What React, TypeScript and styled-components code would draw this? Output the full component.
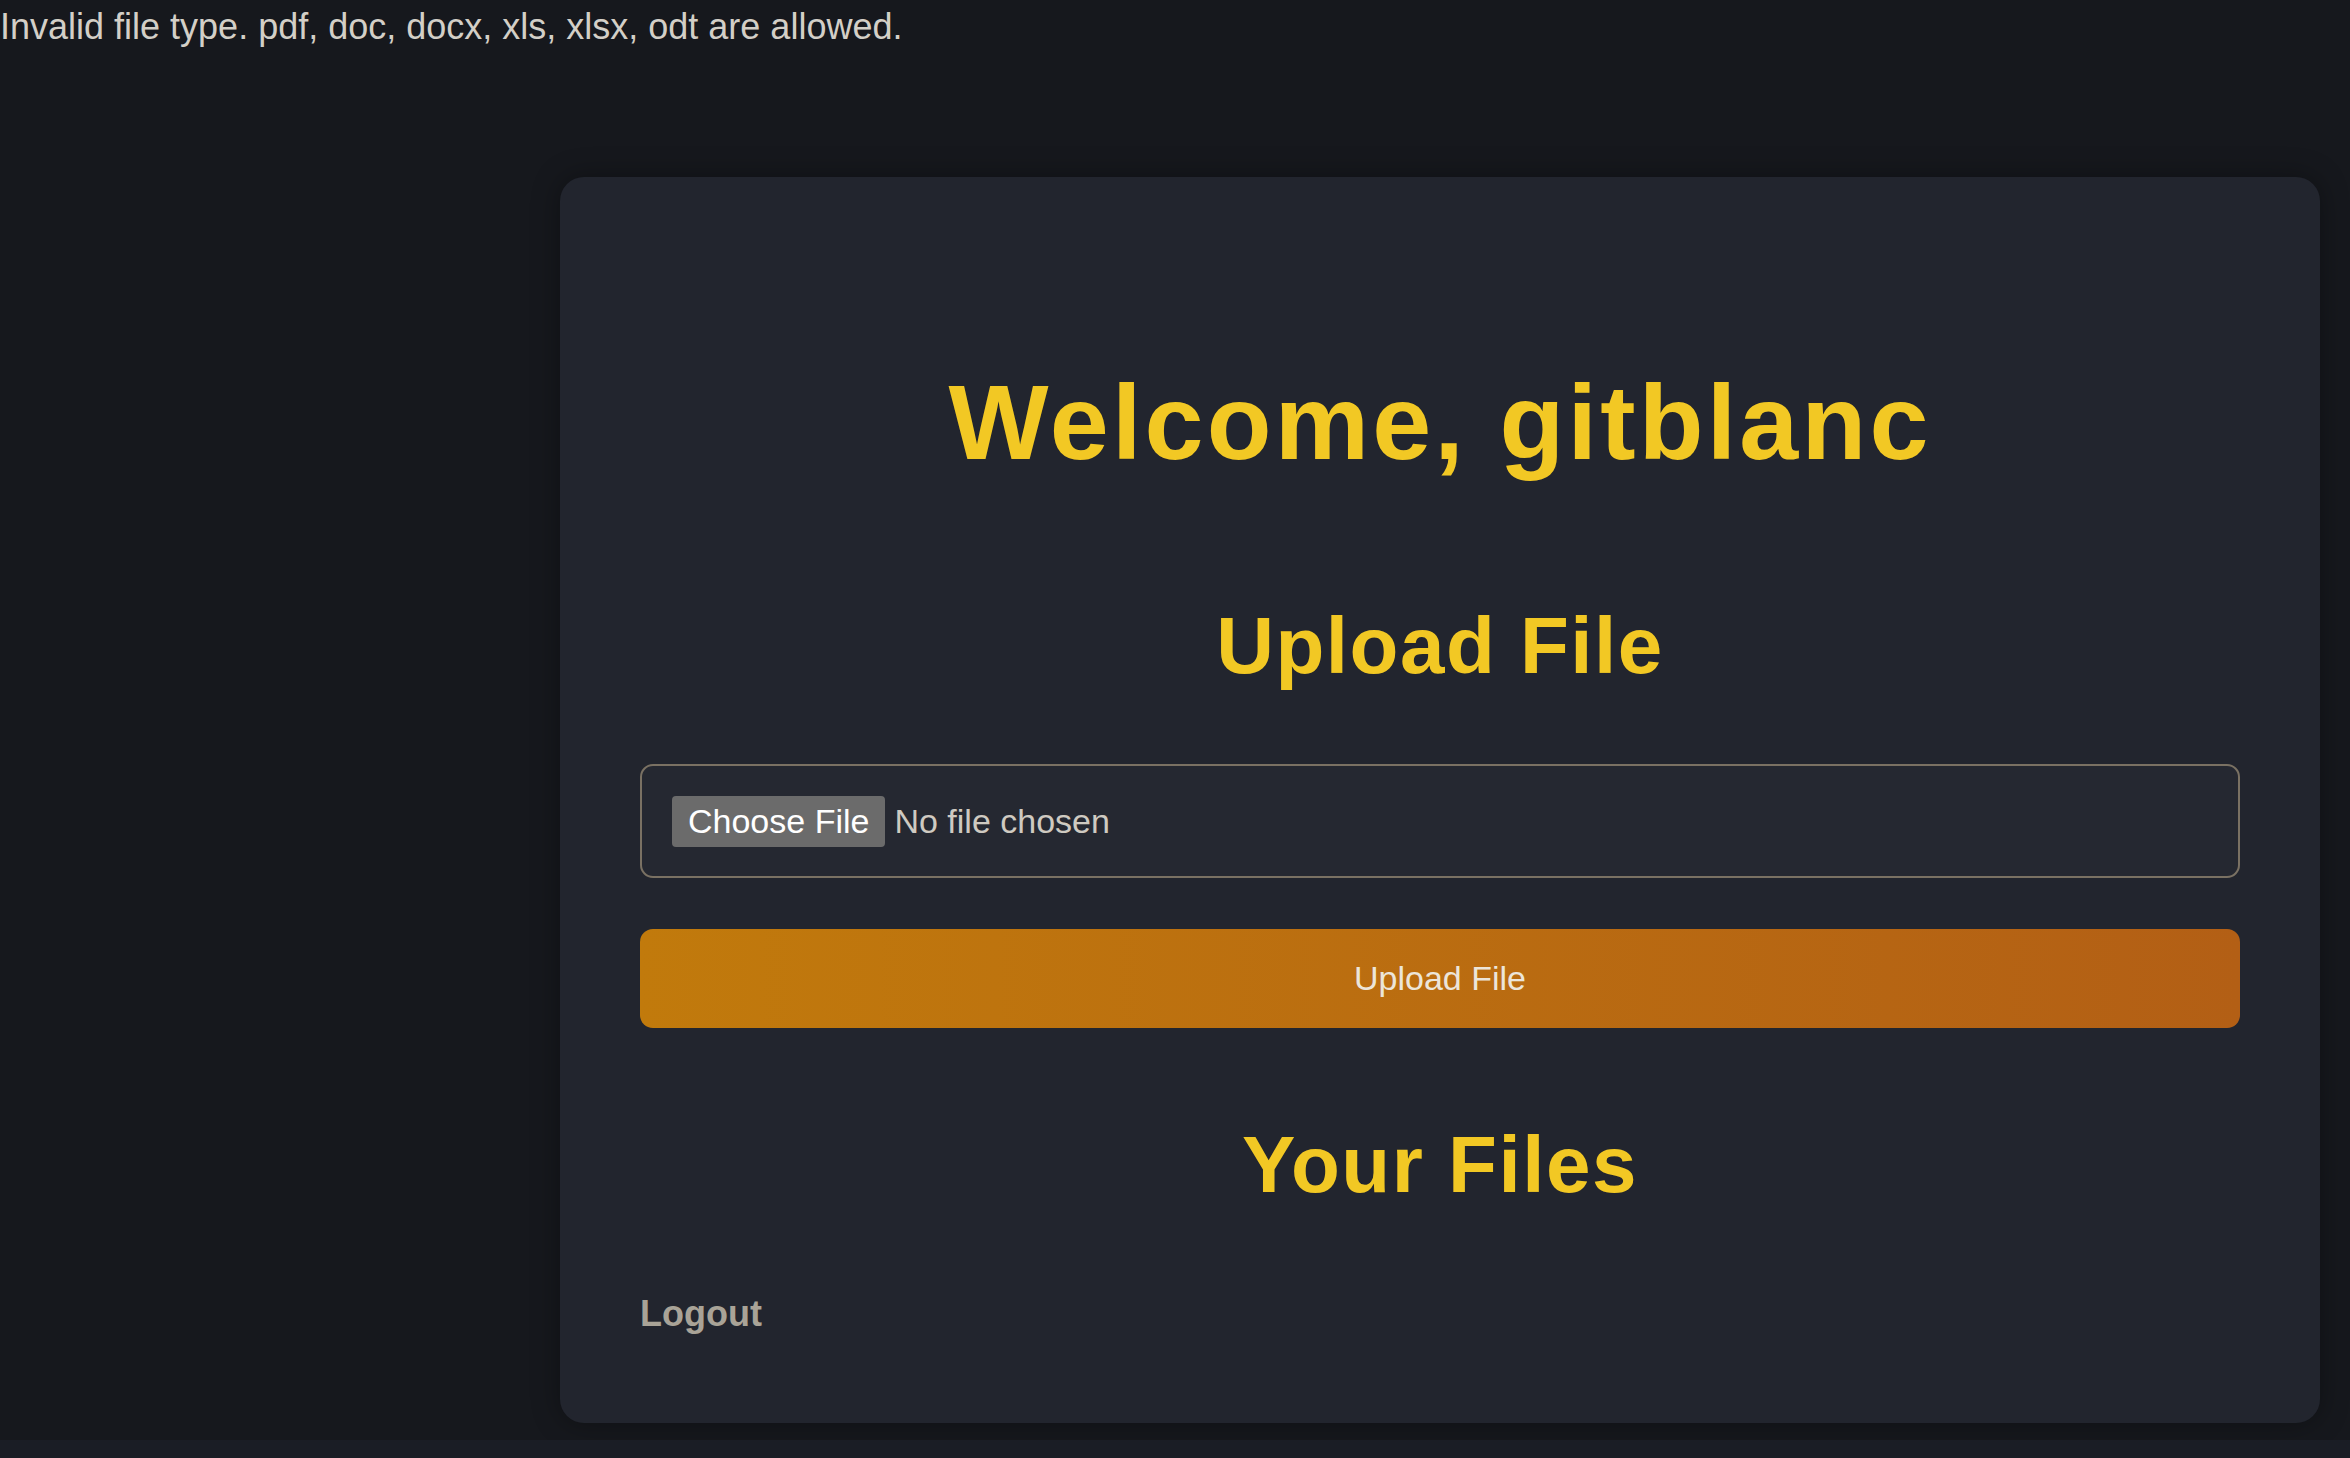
import React from "react";
import styled, { createGlobalStyle } from "styled-components";

const GlobalStyle = createGlobalStyle`
  html {
    background: #1a1d25;
  }
  body {
    margin: 0;
    background: #16181d;
    font-family: "Liberation Sans", Arial, sans-serif;
    color: #d6d2ca;
  }
`;

const Page = styled.div`
  display: flex;
  flex-direction: column;
  padding-top: 7px;
  padding-bottom: 17px;
`;

const Flash = styled.div`
  font-size: 36px;
  line-height: 40px;
  color: #d3cfc7;
`;

const Main = styled.main`
  display: flex;
  justify-content: flex-end;
  padding-right: 30px;
  margin-top: 130px;
`;

const Card = styled.section`
  width: 1760px;
  box-sizing: border-box;
  background: #22252e;
  border-radius: 24px;
  box-shadow: 0 0 28px rgba(0, 0, 0, 0.35);
  padding: 182px 80px 88px;
  display: flex;
  flex-direction: column;
`;

const Title = styled.h1`
  margin: 0;
  text-align: center;
  color: #f2c824;
  font-size: 106px;
  line-height: 127px;
  font-weight: 700;
  letter-spacing: 3.2px;
`;

const SectionTitle = styled.h2<{ $gap: number }>`
  margin: ${(p) => p.$gap}px 0 0;
  text-align: center;
  color: #f2c824;
  font-size: 80px;
  line-height: 96px;
  font-weight: 700;
  letter-spacing: 1.5px;
`;

const Form = styled.form`
  display: flex;
  flex-direction: column;
  gap: 51px;
  margin-top: 70px;
`;

const FileField = styled.label`
  display: flex;
  align-items: center;
  gap: 9px;
  height: 114px;
  box-sizing: border-box;
  padding: 0 30px;
  border: 2px solid #7a7163;
  border-radius: 13px;
  background: #252831;
  cursor: pointer;
`;

const HiddenInput = styled.input`
  display: none;
`;

const ChooseButton = styled.span`
  display: inline-flex;
  align-items: center;
  height: 51px;
  padding: 0 16px;
  background: #6b6b6b;
  border-radius: 4px;
  color: #ffffff;
  font-size: 34px;
`;

const FileName = styled.span`
  color: #cfcac1;
  font-size: 34px;
`;

const SubmitButton = styled.button`
  height: 99px;
  border: none;
  border-radius: 13px;
  background: linear-gradient(90deg, #c17a0c 0%, #b35f15 100%);
  color: #ece5d9;
  font-family: "Liberation Sans", Arial, sans-serif;
  font-size: 34px;
  cursor: pointer;
`;

const LogoutLink = styled.a`
  align-self: flex-start;
  margin-top: 79px;
  color: #a9a397;
  font-size: 36px;
  line-height: 43px;
  font-weight: 700;
  text-decoration: none;
`;

export default function App() {
  return (
    <>
      <GlobalStyle />
      <Page>
        <Flash>Invalid file type. pdf, doc, docx, xls, xlsx, odt are allowed.</Flash>
        <Main>
          <Card>
            <Title>Welcome, gitblanc</Title>
            <SectionTitle $gap={112}>Upload File</SectionTitle>
            <Form onSubmit={(e) => e.preventDefault()}>
              <FileField>
                <HiddenInput type="file" />
                <ChooseButton>Choose File</ChooseButton>
                <FileName>No file chosen</FileName>
              </FileField>
              <SubmitButton type="submit">Upload File</SubmitButton>
            </Form>
            <SectionTitle $gap={89}>Your Files</SectionTitle>
            <LogoutLink href="#">Logout</LogoutLink>
          </Card>
        </Main>
      </Page>
    </>
  );
}
